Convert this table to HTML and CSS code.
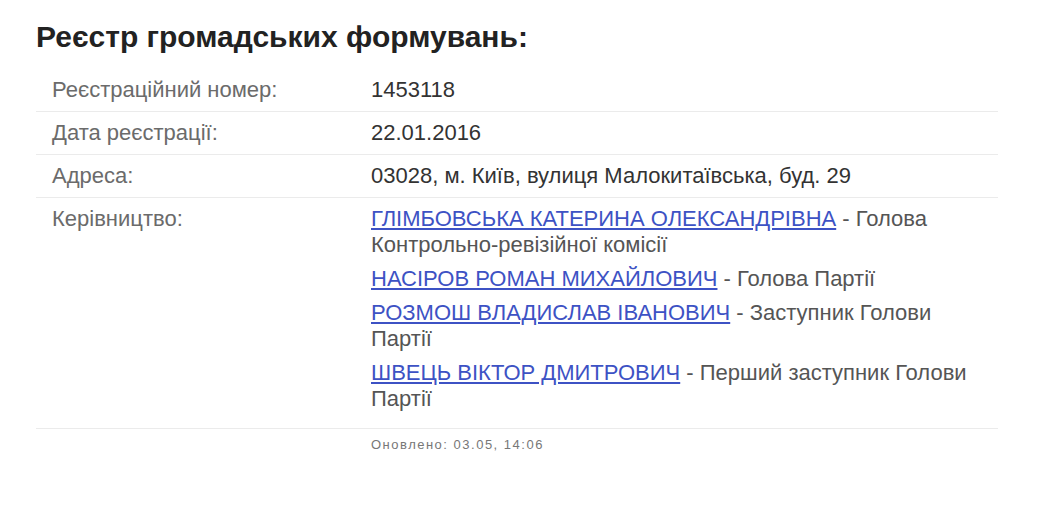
FILE: index.html
```html
<!DOCTYPE html>
<html lang="uk">
<head>
<meta charset="utf-8">
<title>Реєстр громадських формувань</title>
<link rel="stylesheet" href="styles.css">
</head>
<body>
<div class="page">
  <h2 class="title">Реєстр громадських формувань:</h2>
  <div class="table">
    <div class="row">
      <div class="label">Реєстраційний номер:</div>
      <div class="value">1453118</div>
    </div>
    <div class="row">
      <div class="label">Дата реєстрації:</div>
      <div class="value">22.01.2016</div>
    </div>
    <div class="row">
      <div class="label">Адреса:</div>
      <div class="value">03028, м. Київ, вулиця Малокитаївська, буд. 29</div>
    </div>
    <div class="row">
      <div class="label">Керівництво:</div>
      <div class="value">
        <div class="person"><a href="#">ГЛІМБОВСЬКА КАТЕРИНА ОЛЕКСАНДРІВНА</a> - Голова Контрольно-ревізійної комісії</div>
        <div class="person"><a href="#">НАСІРОВ РОМАН МИХАЙЛОВИЧ</a> - Голова Партії</div>
        <div class="person"><a href="#">РОЗМОШ ВЛАДИСЛАВ ІВАНОВИЧ</a> - Заступник Голови Партії</div>
        <div class="person"><a href="#">ШВЕЦЬ ВІКТОР ДМИТРОВИЧ</a> - Перший заступник Голови Партії</div>
      </div>
    </div>
  </div>
  <div class="updated">Оновлено: 03.05, 14:06</div>
</div>
</body>
</html>
```
FILE: styles.css
```css
html, body {
  margin: 0;
  padding: 0;
  background: #ffffff;
}
body {
  font-family: "Liberation Sans", Arial, sans-serif;
}
.page {
  padding: 20px 0 0 36px;
  width: 962px;
}
.title {
  margin: 0 0 16px 0;
  font-size: 30px;
  line-height: 33px;
  font-weight: bold;
  color: #222222;
}
.table {
  display: flex;
  flex-direction: column;
}
.row {
  display: grid;
  grid-template-columns: 335px 1fr;
  border-bottom: 1px solid #ebebeb;
  font-size: 22px;
  line-height: 26px;
}
.label {
  padding: 8px 0 8px 16px;
  color: #6b6b6b;
}
.value {
  padding: 8px 20px 8px 0;
  color: #333333;
}
.person {
  color: #555555;
  margin-bottom: 8px;
}
.person a {
  color: #3d52c4;
  text-decoration: underline;
}
.updated {
  margin: 8px 0 0 335px;
  font-size: 13px;
  line-height: 16px;
  letter-spacing: 1.5px;
  color: #777777;
}
```
